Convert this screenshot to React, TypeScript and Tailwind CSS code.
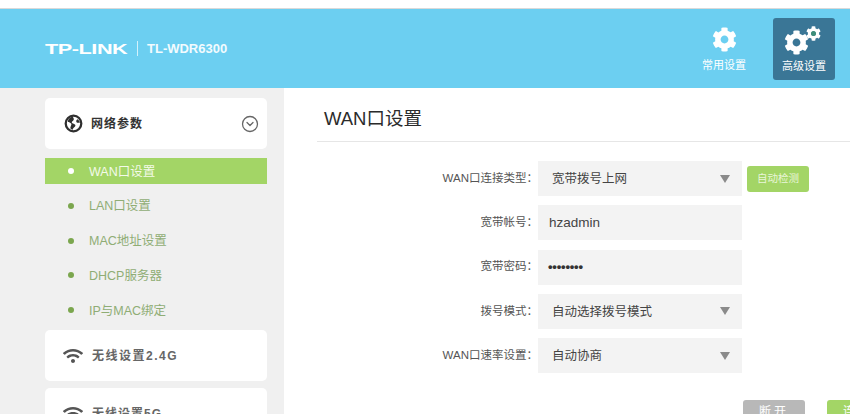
import { CircleChevronDown } from "lucide-react";
import { FaCog, FaWifi } from "react-icons/fa";

const font = { fontFamily: '"Liberation Sans", "Noto Sans CJK SC", sans-serif' };

const subItems = ["WAN口设置", "LAN口设置", "MAC地址设置", "DHCP服务器", "IP与MAC绑定"];

function GlobeIcon() {
  return (
    <svg width="19" height="19" viewBox="0 0 20 20" className="shrink-0">
      <circle cx="10" cy="10" r="8.2" fill="none" stroke="#2f2f2f" strokeWidth="2.4" />
      <path d="M9 2.5C5.5 3.5 4 6 4 8.5c1.5 0 2.5.6 3.5 1.6.6.7.3 1.6-.3 2.4L6.6 15l2.2 1.8c.5-1.8 1.8-2.5 2.8-3.7.9-1.1.3-2-1-2.6L8.4 9.400c-.5-.9.2-1.700 1.100-2.400 1-.8 1.500-2.300-.5-4.500zM14 5.500c-1 .8-1.500 2-.8 3.100.6.800 2 .8 3.600.4-.3-1.400-1.400-2.800-2.800-3.500z" fill="#2f2f2f" />
    </svg>
  );
}

function Row({ label, children }: { label: string; children: React.ReactNode }) {
  return (
    <div className="flex items-center h-[35px]">
      <span className="w-[109px] text-right text-[11.500px] text-[#555]">{label}：</span>
      {children}
    </div>
  );
}

function SelectBox({ value }: { value: string }) {
  return (
    <div className="flex h-[35px] w-[204px] items-center justify-between bg-[#f3f3f3] pl-[14px] pr-[12px] text-[12.500px] text-[#444]">
      <span className="pt-[2px]">{value}</span>
      <span className="h-0 w-0 border-x-[5.500px] border-t-[8px] border-x-transparent border-t-[#8a8a8a]" />
    </div>
  );
}

export default function App() {
  return (
    <div className="h-[414px] w-[850px] overflow-hidden bg-white" style={font}>
      <div className="h-[9px] border-b border-[#d9d9d9] bg-white" />
      <header className="flex h-[79px] items-center justify-between bg-[#6ccff1] pl-[45px] pr-[15px]">
        <div className="flex items-center text-white">
          <span className="w-[83px] origin-left scale-x-[1.55] text-[14px] font-bold leading-none tracking-[-0.3px]">TP-LINK</span>
          <span className="mx-[9px] h-[15px] w-px bg-white/70" />
          <span className="text-[13px] font-bold text-[#f2fbfe]">TL-WDR6300</span>
        </div>
        <div className="flex items-center gap-[20px]">
          <div className="flex w-[58px] flex-col items-center text-white">
            <FaCog size={25} className="mt-[2px]" />
            <span className="mt-[6px] text-[11px] leading-[14px]">常用设置</span>
          </div>
          <div className="flex h-[62px] w-[62px] flex-col items-center rounded-[3px] bg-[#3a7696] text-white">
            <div className="relative mt-[8px] h-[29px] w-[38px]">
              <FaCog size={25} className="absolute bottom-0 left-[-1px]" />
              <FaCog size={15} className="absolute right-[2px] top-0" />
              <span className="absolute right-[7px] top-[5px] h-[5px] w-[5px] rounded-full bg-[#3f8f7a]" />
            </div>
            <span className="mt-[4px] text-[11px] leading-[14px]">高级设置</span>
          </div>
        </div>
      </header>
      <div className="flex">
        <aside className="h-[326px] w-[284px] shrink-0 overflow-hidden bg-[#f0f0f0] pl-[45px] pr-[17px] pt-[10px]">
          <div className="flex h-[51px] items-center rounded-[5px] bg-white pl-[19px] pr-[8px]">
            <GlobeIcon />
            <span className="ml-[8px] flex-1 text-[12px] font-bold tracking-[1px] text-[#333]">网络参数</span>
            <CircleChevronDown size={18} strokeWidth={1.7} color="#666" />
          </div>
          <ul className="mt-[9px] flex flex-col gap-[8.750px]">
            {subItems.map((item, idx) => (
              <li
                key={item}
                className={`flex h-[26px] items-center pl-[23px] text-[12.500px] ${idx === 0 ? "bg-[#a3d566] text-[#f3fae9]" : "text-[#8fad75]"}`}
              >
                <span className={`h-[6px] w-[6px] rounded-full ${idx === 0 ? "bg-white" : "bg-[#7ba64e]"}`} />
                <span className="ml-[15px] pt-[2px]">{item}</span>
              </li>
            ))}
          </ul>
          <div className="mt-[7px] flex h-[51px] items-center rounded-[5px] bg-white pl-[18px]">
            <FaWifi size={20} color="#555" />
            <span className="ml-[9px] text-[12px] font-bold tracking-[1.500px] text-[#666]">无线设置2.4G</span>
          </div>
          <div className="mt-[7px] flex h-[51px] items-center rounded-[5px] bg-white pl-[18px]">
            <FaWifi size={20} color="#555" />
            <span className="ml-[9px] text-[12px] font-bold tracking-[1px] text-[#666]">无线设置5G</span>
          </div>
        </aside>
        <main className="min-w-0 flex-1">
          <div className="ml-[33px] flex h-[54px] items-center border-b border-[#e6e6e6] pl-[7px] pt-[9px] text-[18.500px] text-[#2b2b2b]">
            WAN口设置
          </div>
          <div className="ml-[145px] mt-[19px] flex flex-col gap-[9.300px]">
            <Row label="WAN口连接类型">
              <SelectBox value="宽带拨号上网" />
              <button className="ml-[5px] h-[26px] w-[62px] rounded-[3px] bg-[#a3d566] text-[10.500px] text-[#e9f6d9]">自动检测</button>
            </Row>
            <Row label="宽带帐号">
              <div className="flex h-[35px] w-[204px] items-center bg-[#f3f3f3] pl-[11px] text-[13.500px] text-[#444]">hzadmin</div>
            </Row>
            <Row label="宽带密码">
              <div className="flex h-[35px] w-[204px] items-center bg-[#f3f3f3] pl-[10px] text-[13px] font-bold tracking-[-0.2px] text-[#333]">••••••••</div>
            </Row>
            <Row label="拨号模式">
              <SelectBox value="自动选择拨号模式" />
            </Row>
            <Row label="WAN口速率设置">
              <SelectBox value="自动协商" />
            </Row>
          </div>
          <div className="ml-[459px] mt-[27px] flex gap-[22px]">
            <button className="h-[35px] w-[62px] shrink-0 rounded-[3px] bg-[#b8b8b8] pb-[12px] text-[12px] tracking-[3px] text-white">断开</button>
            <button className="h-[35px] w-[62px] shrink-0 rounded-[3px] bg-[#a3d566] pb-[12px] text-[12px] tracking-[3px] text-white">连接</button>
          </div>
        </main>
      </div>
    </div>
  );
}
